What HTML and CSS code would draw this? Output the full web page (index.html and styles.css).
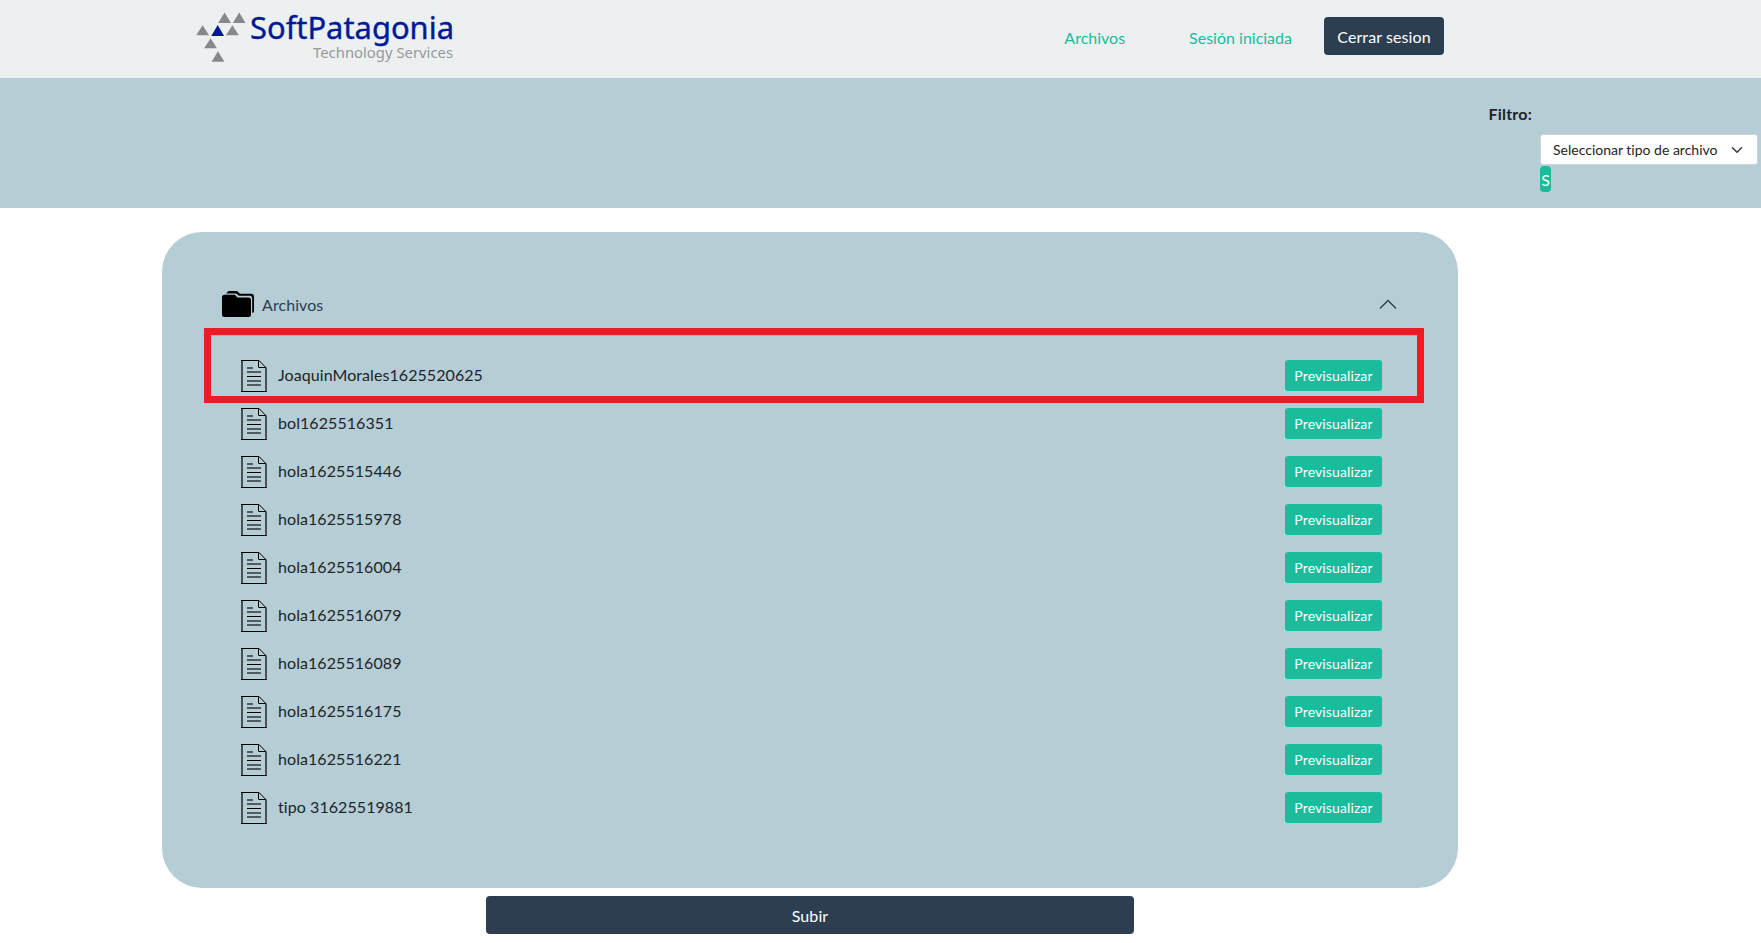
FILE: index.html
```
<!DOCTYPE html>
<html lang="es">
<head>
<meta charset="utf-8">
<title>SoftPatagonia</title>
<link rel="stylesheet" href="styles.css">
</head>
<body>
<svg class="defs" width="0" height="0" aria-hidden="true">
  <symbol id="file" viewBox="0 0 26 32">
    <path d="M1 0V32M25 8V32" stroke="#000" stroke-opacity=".6" stroke-width="2" fill="none"/>
    <path d="M0 .5H18L25.3 8M17.5 .5V7.5H25M0 31.5H26" stroke="#000" stroke-width="1" fill="none"/>
    <path d="M6 8H12M6 12H20M6 21H20M6 25H20" stroke="#000" stroke-opacity=".55" stroke-width="2" fill="none"/>
    <path d="M6 16.5H20" stroke="#000" stroke-width="1" fill="none"/>
  </symbol>
</svg>
<header class="topbar">
  <svg class="logo" width="264" height="60" viewBox="190 5 264 60" role="img" aria-label="SoftPatagonia Technology Services">
    <path fill="#888" d="M224.6 12.5l6.4 10.5h-12.8zM239.2 12.5l6.4 10.5h-12.8zM202.6 25.3l6.4 10h-12.8zM232.4 25.3l6.4 10h-12.8zM210.6 38.2l6.4 10h-12.8zM218 51.3l6.4 10.5h-12.8z"/>
    <path fill="#001a96" d="M217.7 25l6.4 11h-12.8z"/>
    <text class="logo-name" x="250" y="38.7" textLength="204" lengthAdjust="spacingAndGlyphs">SoftPatagonia</text>
    <text class="logo-tag" x="313" y="57.5" textLength="140" lengthAdjust="spacingAndGlyphs">Technology Services</text>
  </svg>
  <nav class="nav">
    <a class="link">Archivos</a>
    <a class="link">Sesión iniciada</a>
    <button class="btn-dark logout">Cerrar sesion</button>
  </nav>
</header>
<section class="filter">
  <strong class="filter-label">Filtro:</strong>
  <div class="filter-controls">
    <div class="select"><span>Seleccionar tipo de archivo</span>
      <svg width="12" height="12" viewBox="0 0 16 16"><path d="M2 5l6 6 6-6" fill="none" stroke="#343a40" stroke-width="2" stroke-linecap="round" stroke-linejoin="round"/></svg>
    </div>
    <button class="tiny">S</button>
  </div>
</section>
<main class="content">
  <section class="card">
    <div class="card-head">
      <svg class="folder" width="32" height="26" viewBox="0 0 32 26"><path d="M4 2.500L6.500 0H15L18 2.800H29.500Q32 3 32 5.500V20Q32 22 30.200 22V7Q30 5 28 4.800H17L14 2.500Z"/><path d="M2.500 3.700H12.800L15.500 6.500H26.500Q29 6.500 29 9V23.500Q29 26 26.500 26H2.500Q0 26 0 23.500V6.200Q0 3.700 2.500 3.700Z"/></svg>
      <span>Archivos</span>
      <svg class="chev" width="18" height="11" viewBox="0 0 18 11"><path d="M1 9.500l8-8 8 8" fill="none" stroke="#2c3e50" stroke-width="1.300"/></svg>
    </div>
    <ul class="files">
      <li><svg class="ico"><use href="#file"/></svg><span>JoaquinMorales1625520625</span><button class="view">Previsualizar</button></li>
      <li><svg class="ico"><use href="#file"/></svg><span>bol1625516351</span><button class="view">Previsualizar</button></li>
      <li><svg class="ico"><use href="#file"/></svg><span>hola1625515446</span><button class="view">Previsualizar</button></li>
      <li><svg class="ico"><use href="#file"/></svg><span>hola1625515978</span><button class="view">Previsualizar</button></li>
      <li><svg class="ico"><use href="#file"/></svg><span>hola1625516004</span><button class="view">Previsualizar</button></li>
      <li><svg class="ico"><use href="#file"/></svg><span>hola1625516079</span><button class="view">Previsualizar</button></li>
      <li><svg class="ico"><use href="#file"/></svg><span>hola1625516089</span><button class="view">Previsualizar</button></li>
      <li><svg class="ico"><use href="#file"/></svg><span>hola1625516175</span><button class="view">Previsualizar</button></li>
      <li><svg class="ico"><use href="#file"/></svg><span>hola1625516221</span><button class="view">Previsualizar</button></li>
      <li><svg class="ico"><use href="#file"/></svg><span>tipo 31625519881</span><button class="view">Previsualizar</button></li>
    </ul>
    <div class="marker"></div>
  </section>
  <button class="btn-dark upload">Subir</button>
</main>
</body>
</html>
```
FILE: styles.css
```
* { box-sizing: border-box; }
body { margin: 0; background: #fff; color: #212529; font: 16px/24px Lato, sans-serif; font-variant-ligatures: none; overflow: hidden; }
button { border: 0; padding: 0; font: inherit; color: #fff; border-radius: 4px; }
.defs { position: absolute; }
.topbar { height: 78px; padding: 5px 317px 0 190px; background: #ecf0f1; display: flex; justify-content: space-between; align-items: flex-start; }
.logo { display: block; }
.logo-name { font: 31px "Noto Sans", sans-serif; fill: #001a96; stroke: #001a96; stroke-width: .4px; }
.logo-tag { font: 15px "Noto Sans", sans-serif; fill: #999; }
.nav { display: flex; padding-top: 12px; align-items: center; }
.link { color: #1abc9c; margin-right: 64px; padding-top: 3px; }
.link + .link { margin-right: 32px; }
.btn-dark { background: #2c3e50; height: 38px; padding-top: 1px; letter-spacing: .1px; }
.logout { width: 120px; }
.filter { height: 130px; background: #b5cdd4; display: flex; justify-content: flex-end; padding: 24px 3px 0 0; }
.filter-label { margin-right: 8px; letter-spacing: .2px; }
.filter-controls { padding-top: 32px; margin-left: 0; padding-left: 0; width: 218px; }
.select { height: 31px; background: #fff; border: 1px solid #ced4da; border-radius: 3px; display: flex; align-items: center; justify-content: space-between; padding: 0 14px 0 12px; font-size: 14px; line-height: 21px; }
.tiny { display: block; margin-top: 1px; width: 11px; height: 26px; background: #1abc9c; padding-top: 2px; }
.content { padding: 24px 0 0 162px; width: 1458px; display: flex; flex-direction: column; align-items: center; }
.card { position: relative; width: 1296px; height: 656px; border-radius: 40px; background: #b5cdd4; padding: 40px; }
.card-head { height: 64px; display: flex; align-items: center; padding: 0 21px 0 20px; border-bottom: 1px solid #a3b9bf; color: #2c3e50; }
.card-head span { margin-left: 8px; padding-top: 2px; letter-spacing: .08px; }
.card-head svg { fill: #000; }
.folder { margin-top: 1px; }
.chev { margin: 1px 0 0 auto; }
.files { list-style: none; margin: 0; padding: 24px 36px 0 39px; }
.files li { display: flex; height: 48px; align-items: flex-start; }
.ico { width: 26px; height: 32px; margin-right: 11px; }
.files span { padding-top: 3px; letter-spacing: .07px; }
.view { margin-left: auto; width: 97px; height: 31px; background: #1abc9c; font-size: 14px; letter-spacing: .12px; border-radius: 3px; }
.marker { position: absolute; left: 42px; top: 96px; width: 1220px; height: 75px; border: 7px solid #ed1c24; }
.upload { margin-top: 8px; width: 648px; }
```
